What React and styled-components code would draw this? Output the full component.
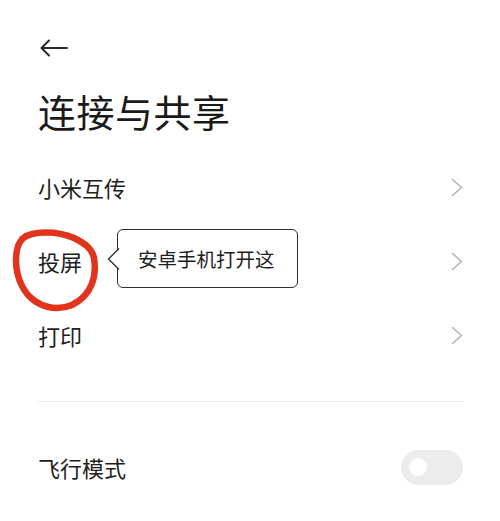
import styled, { createGlobalStyle } from "styled-components";

const GlobalStyle = createGlobalStyle`
  html, body {
    margin: 0;
    padding: 0;
    background: #ffffff;
  }
  body {
    font-family: "Noto Sans CJK SC", "Noto Sans", sans-serif;
    color: #1e1e1e;
  }
`;

const Page = styled.div`
  width: 500px;
  height: 521px;
  padding: 0 37px 0 38px;
  box-sizing: border-box;
  overflow: hidden;
`;

const Header = styled.div`
  height: 83px;
  padding-top: 39px;
  padding-left: 2px;
  box-sizing: border-box;
  display: flex;
  align-items: flex-start;
`;

const Title = styled.h1`
  margin: 0;
  height: 54px;
  display: flex;
  align-items: center;
  font-size: 38px;
  font-weight: 400;
  letter-spacing: 0.5px;
  color: #1a1a1a;
`;

const List = styled.div`
  margin-top: 13px;
  display: flex;
  flex-direction: column;
`;

const Row = styled.div`
  position: relative;
  height: 74px;
  display: flex;
  align-items: center;
  justify-content: space-between;
  margin-top: ${(p) => p.$gap || 0}px;
`;

const Label = styled.span`
  font-size: 22px;
  line-height: 1;
  color: #1e1e1e;
`;

const Divider = styled.div`
  margin-top: 29px;
  height: 1px;
  background: #ececec;
`;

const Toggle = styled.div`
  width: 62px;
  height: 35px;
  border-radius: 18px;
  background: #ececec;
  display: flex;
  align-items: center;
  padding-left: 8px;
  box-sizing: border-box;
`;

const Knob = styled.div`
  width: 18px;
  height: 18px;
  border-radius: 50%;
  background: #ffffff;
`;

const Bubble = styled.div`
  position: absolute;
  left: 79px;
  top: 5px;
  width: 181px;
  height: 59px;
  box-sizing: border-box;
  border: 1.3px solid #2e2e2e;
  border-radius: 6px;
  background: #ffffff;
  display: flex;
  align-items: center;
  padding-left: 20px;
  font-size: 19.5px;
  color: #1e1e1e;
`;

const Tail = styled.svg`
  position: absolute;
  left: -11px;
  top: 18px;
`;

const Scribble = styled.svg`
  position: absolute;
  left: -28px;
  top: 2px;
  pointer-events: none;
`;

const BackArrow = () => (
  <svg width="28" height="18" viewBox="0 0 28 18" fill="none">
    <path d="M27 9H2M9 1.5L1.5 9L9 16.5" stroke="#2a2a2a" strokeWidth="2" strokeLinecap="round" strokeLinejoin="round" />
  </svg>
);

const Chevron = () => (
  <svg width="12" height="19" viewBox="0 0 12 19" fill="none">
    <path d="M1.5 1.5L10.5 9.5L1.5 17.5" stroke="#b4b4b4" strokeWidth="1.6" strokeLinecap="round" strokeLinejoin="round" />
  </svg>
);

export default function App() {
  return (
    <>
      <GlobalStyle />
      <Page>
        <Header>
          <BackArrow />
        </Header>
        <Title>连接与共享</Title>
        <List>
          <Row>
            <Label>小米互传</Label>
            <Chevron />
          </Row>
          <Row>
            <Label>投屏</Label>
            <Chevron />
            <Bubble>
              <Tail width="13" height="24" viewBox="0 0 13 24">
                <path d="M13 0.5L12 0.5L1.5 11L12 21.5L13 21.5Z" fill="#ffffff" />
                <path d="M12 0.5L1.5 11L12 21.5" stroke="#2e2e2e" strokeWidth="1.3" fill="none" strokeLinejoin="round" />
              </Tail>
              安卓手机打开这
            </Bubble>
            <Scribble width="90" height="90" viewBox="10 226 90 90" fill="none">
              <path
                d="M22 239 C 32 230, 58 231, 74 238 C 84 243, 92 248, 94 258 C 97 276, 92 295, 72 305 C 55 312, 38 306, 28 295 C 18 283, 14 266, 17 250 C 18 244, 20 240, 26 236"
                stroke="#e2341d"
                strokeWidth="6.5"
                strokeLinecap="round"
                strokeLinejoin="round"
              />
            </Scribble>
          </Row>
          <Row>
            <Label>打印</Label>
            <Chevron />
          </Row>
        </List>
        <Divider />
        <Row $gap={28}>
          <Label>飞行模式</Label>
          <Toggle>
            <Knob />
          </Toggle>
        </Row>
      </Page>
    </>
  );
}
